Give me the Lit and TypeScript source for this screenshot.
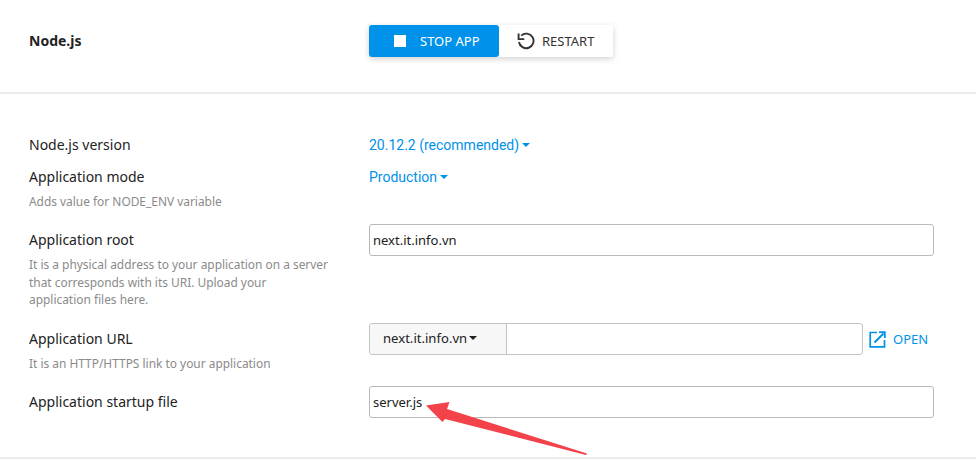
import { LitElement, html, css } from "lit";
import { customElement } from "lit/decorators.js";

@customElement("app-root")
export class AppRoot extends LitElement {
  static styles = css`
    :host { display: block; position: relative; width: 976px; height: 472px; background: #fff; overflow: hidden; font-family: "Noto Sans", sans-serif; color: #222; }
    .head { box-sizing: border-box; border-bottom: 2px solid #ececec; height: 94px; display: grid; grid-template-columns: 340px 1fr; padding: 25px 42px 0 29px; }
    .title { font-size: 14px; font-weight: 700; line-height: 32px; color: #222; }
    .btns { display: flex; width: 244px; height: 32px; border-radius: 3px; box-shadow: 0 2px 6px rgba(0,0,0,.18); }
    .btn { display: flex; align-items: center; font-size: 13px; }
    .stop { width: 130px; background: #0091ea; color: #fff; border-radius: 3px; padding-left: 25px; box-sizing: border-box; gap: 14px; }
    .square { width: 12px; height: 12px; background: #fff; }
    .restart { flex: 1; background: #fff; border-radius: 0 3px 3px 0; padding-left: 18px; gap: 7px; color: #333; }
    .form { padding: 0 42px 0 29px; display: grid; grid-template-columns: 340px 1fr; margin-top: 40px; border-bottom: 2px solid #ececec; height: 323px; align-content: start; }
    .label { font-size: 14px; line-height: 22px; color: #222; }
    .hint { font-size: 11.92px; line-height: 17.5px; color: #8a8a8a; margin-top: 5px; width: 302px; }
    .c { min-height: 0; }
    .link { font-family: Roboto, sans-serif; font-size: 14px; line-height: 22px; color: #0091ea; display: flex; align-items: center; gap: 3px; }
    .caret { width: 0; height: 0; border: 4px solid transparent; border-top-color: currentColor; border-bottom: 0; }
    .input { height: 32px; margin-top: -5px; box-sizing: border-box; border: 1px solid #b9b9b9; border-radius: 3px; font-size: 13px; line-height: 30px; padding-left: 3px; color: #222; }
    .urlrow { display: flex; align-items: center; margin-top: -5px; }
    .group { display: flex; width: 494px; height: 32px; box-sizing: border-box; border: 1px solid #c4c4c4; border-radius: 3px; }
    .domain { width: 137px; background: #f7f7f7; border-right: 1px solid #c4c4c4; border-radius: 3px 0 0 3px; font-size: 13.1px; display: flex; align-items: center; padding: 0 0 3px 13px; box-sizing: border-box; gap: 2px; color: #222; }
    .open { display: flex; align-items: center; margin-left: 6px; gap: 7px; color: #0091ea; font-size: 13px; }
    .arrow { position: absolute; left: 0; top: 0; pointer-events: none; }
    .s32 { height: 32px; }
    .s63 { height: 63px; }
    .s99 { height: 99px; }
  `;

  render() {
    return html`
      <div class="head">
        <div class="title">Node.js</div>
        <div class="btns">
          <div class="btn stop"><span class="square"></span>STOP APP</div>
          <div class="btn restart">
            <svg width="18" height="18" viewBox="0 0 18 18" fill="none" stroke="#333" stroke-width="1.9">
              <path d="M4.2 3.6A7.3 7.3 0 1 1 2 10"/>
              <path d="M1.6 1.4v5.7h5.7"/>
            </svg>
            RESTART
          </div>
        </div>
      </div>
      <div class="form">
        <div class="label">Node.js version</div>
        <div class="c s32"><div class="link">20.12.2 (recommended)<span class="caret"></span></div></div>

        <div>
          <div class="label">Application mode</div>
          <div class="hint">Adds value for NODE_ENV variable</div>
        </div>
        <div class="c s63"><div class="link">Production<span class="caret"></span></div></div>

        <div>
          <div class="label">Application root</div>
          <div class="hint">It is a physical address to your application on a server that corresponds with its URI. Upload your application files here.</div>
        </div>
        <div class="c s99"><div class="input">next.it.info.vn</div></div>

        <div>
          <div class="label">Application URL</div>
          <div class="hint">It is an HTTP/HTTPS link to your application</div>
        </div>
        <div class="c s63">
          <div class="urlrow">
            <div class="group"><div class="domain">next.it.info.vn<span class="caret"></span></div></div>
            <div class="open">
              <svg width="17" height="17" viewBox="0 0 17 17" fill="none" stroke="#0091ea" stroke-width="1.7">
                <path d="M8 1.5H1.2v14.3h14.3V9"/>
                <path d="M5.5 11.5L14.5 2.5" stroke-width="2"/>
                <path d="M10 1.2h5.8V7" stroke-width="1.8"/>
              </svg>
              OPEN
            </div>
          </div>
        </div>

        <div class="label">Application startup file</div>
        <div class="c s32"><div class="input">server.js</div></div>
      </div>
      <svg class="arrow" width="976" height="472" viewBox="0 0 976 472">
        <polygon points="426,405.5 449.5,402 447,409 587,453.5 586,455 445,419 442.5,422" fill="#f4424a"/>
      </svg>
    `;
  }
}
